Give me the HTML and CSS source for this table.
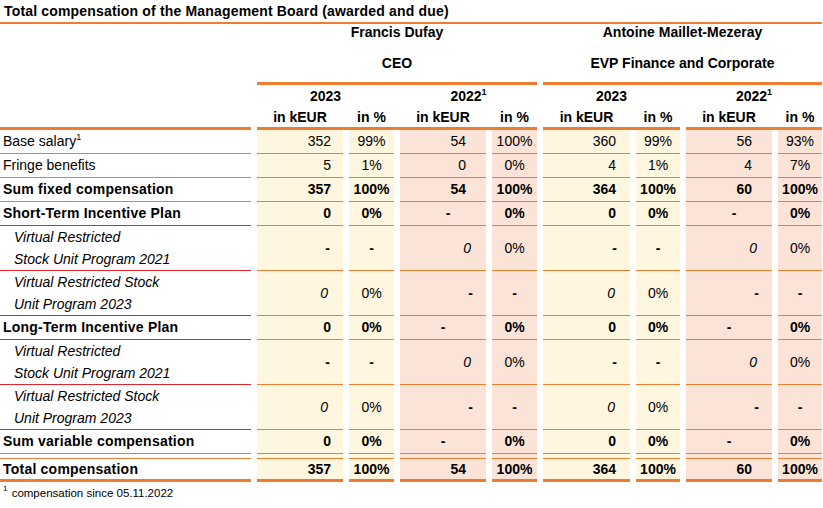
FILE: index.html
```html
<!DOCTYPE html>
<html lang="en">
<head>
<meta charset="utf-8">
<title>Total compensation of the Management Board</title>
<link rel="stylesheet" href="styles.css">
</head>
<body>
<div class="tbl">
  <div class="title">Total compensation of the Management Board (awarded and due)</div>

  <div class="blank"></div>
  <div class="person span-f"><div class="name">Francis Dufay</div><div class="role">CEO</div></div>
  <div class="person span-a"><div class="name">Antoine Maillet-Mezeray</div><div class="role">EVP Finance and Corporate</div></div>

  <div class="blank"></div>
  <div class="yr s23a">2023</div>
  <div class="yr s22a">2022<sup class="sup">1</sup></div>
  <div class="yr s23b">2023</div>
  <div class="yr s22b">2022<sup class="sup">1</sup></div>

  <div class="blank"></div>
  <div class="unit">in kEUR</div><div class="unit">in %</div>
  <div class="unit">in kEUR</div><div class="unit">in %</div>
  <div class="unit">in kEUR</div><div class="unit">in %</div>
  <div class="unit">in kEUR</div><div class="unit">in %</div>

  <div class="hline"></div>
  <div class="hline span-f"></div>
  <div class="hline s23b"></div>
  <div class="hline s22b"></div>

  <!-- Base salary -->
  <div class="lbl"><span>Base salary<sup class="sup">1</sup></span></div>
  <div class="d y k k1">352</div><div class="d y c">99%</div>
  <div class="d p k k2">54</div><div class="d p c">100%</div>
  <div class="d y k k3">360</div><div class="d y c">99%</div>
  <div class="d p k k4">56</div><div class="d p c">93%</div>

  <!-- Fringe benefits -->
  <div class="lbl"><span>Fringe benefits</span></div>
  <div class="d y k k1">5</div><div class="d y c">1%</div>
  <div class="d p k k2">0</div><div class="d p c">0%</div>
  <div class="d y k k3">4</div><div class="d y c">1%</div>
  <div class="d p k k4">4</div><div class="d p c">7%</div>

  <!-- Sum fixed -->
  <div class="lbl b"><span>Sum fixed compensation</span></div>
  <div class="d y k k1 b">357</div><div class="d y c b">100%</div>
  <div class="d p k k2 b">54</div><div class="d p c b">100%</div>
  <div class="d y k k3 b">364</div><div class="d y c b">100%</div>
  <div class="d p k k4 b">60</div><div class="d p c b">100%</div>

  <!-- STIP -->
  <div class="lbl b red"><span>Short-Term Incentive Plan</span></div>
  <div class="d y k k1 b">0</div><div class="d y c b">0%</div>
  <div class="d p c b sh">-</div><div class="d p c b">0%</div>
  <div class="d y k k3 b">0</div><div class="d y c b">0%</div>
  <div class="d p c b sh">-</div><div class="d p c b">0%</div>

  <!-- VRSU 2021 -->
  <div class="lbl i red"><span>Virtual Restricted<br>Stock Unit Program 2021</span></div>
  <div class="d y k dash b">-</div><div class="d y c b">-</div>
  <div class="d p k it">0</div><div class="d p c">0%</div>
  <div class="d y k dash b">-</div><div class="d y c b">-</div>
  <div class="d p k it">0</div><div class="d p c">0%</div>

  <!-- VRSU 2023 -->
  <div class="lbl i red"><span>Virtual Restricted Stock<br>Unit Program 2023</span></div>
  <div class="d y k it">0</div><div class="d y c">0%</div>
  <div class="d p k dash b">-</div><div class="d p c b">-</div>
  <div class="d y k it">0</div><div class="d y c">0%</div>
  <div class="d p k dash b">-</div><div class="d p c b">-</div>

  <!-- LTIP -->
  <div class="lbl b red"><span>Long-Term Incentive Plan</span></div>
  <div class="d y k k1 b">0</div><div class="d y c b">0%</div>
  <div class="d p c b">-</div><div class="d p c b">0%</div>
  <div class="d y k k3 b">0</div><div class="d y c b">0%</div>
  <div class="d p c b">-</div><div class="d p c b">0%</div>

  <!-- VRSU 2021 -->
  <div class="lbl i red"><span>Virtual Restricted<br>Stock Unit Program 2021</span></div>
  <div class="d y k dash b">-</div><div class="d y c b">-</div>
  <div class="d p k it">0</div><div class="d p c">0%</div>
  <div class="d y k dash b">-</div><div class="d y c b">-</div>
  <div class="d p k it">0</div><div class="d p c">0%</div>

  <!-- VRSU 2023 -->
  <div class="lbl i red"><span>Virtual Restricted Stock<br>Unit Program 2023</span></div>
  <div class="d y k it">0</div><div class="d y c">0%</div>
  <div class="d p k dash b">-</div><div class="d p c b">-</div>
  <div class="d y k it">0</div><div class="d y c">0%</div>
  <div class="d p k dash b">-</div><div class="d p c b">-</div>

  <!-- Sum variable -->
  <div class="lbl b"><span>Sum variable compensation</span></div>
  <div class="d y k k1 b">0</div><div class="d y c b">0%</div>
  <div class="d p c b">-</div><div class="d p c b">0%</div>
  <div class="d y k k3 b">0</div><div class="d y c b">0%</div>
  <div class="d p c b">-</div><div class="d p c b">0%</div>

  <!-- Total -->
  <div class="lbl b tot"><span>Total compensation</span></div>
  <div class="d y k k1 b tot">357</div><div class="d y c b tot">100%</div>
  <div class="d p k k2 b tot">54</div><div class="d p c b tot">100%</div>
  <div class="d y k k3 b tot">364</div><div class="d y c b tot">100%</div>
  <div class="d p k k4 b tot">60</div><div class="d p c b tot">100%</div>
</div>
<div class="foot"><sup class="fsup">1</sup> compensation since 05.11.2022</div>
</body>
</html>
```

FILE: styles.css
```css
html, body {
  margin: 0;
  padding: 0;
  background: #ffffff;
}

body {
  font-family: "Liberation Sans", Arial, sans-serif;
  font-size: 14px;
  color: #000000;
  width: 823px;
}

.tbl {
  display: grid;
  grid-template-columns: 251px 86px 45px 86px 45px 87px 44px 86px 44px;
  column-gap: 6px;
  width: 822px;
}

.title {
  grid-column: 1 / -1;
  font-weight: bold;
  line-height: 22px;
  padding-left: 4px;
  letter-spacing: 0.17px;
  border-bottom: 2px solid #ed7d31;
}

.blank {
  grid-column: 1 / 2;
}

.span-f { grid-column: 2 / 6; }
.span-a { grid-column: 6 / 10; }
.s23a { grid-column: 2 / 4; }
.s22a { grid-column: 4 / 6; }
.s23b { grid-column: 6 / 8; }
.s22b { grid-column: 8 / 10; }

.person {
  display: flex;
  flex-direction: column;
  align-items: center;
  font-weight: bold;
  padding-bottom: 9px;
  border-bottom: 3px solid #ed7d31;
}

.person .name {
  line-height: 17px;
}

.person .role {
  line-height: 20px;
  margin-top: 12px;
}

.yr {
  text-align: center;
  font-weight: bold;
  line-height: 22px;
}

.unit {
  text-align: center;
  font-weight: bold;
  line-height: 20px;
}

.sup {
  font-size: 9px;
  line-height: 0;
  vertical-align: 6px;
  font-weight: normal;
}

.yr .sup {
  font-weight: bold;
}

.hline {
  height: 3px;
  background: #ed7d31;
}

.lbl {
  display: flex;
  align-items: center;
  line-height: 23px;
  padding-left: 3px;
  border-bottom: 1px solid #ed7d31;
}

.lbl.b {
  letter-spacing: 0.22px;
}

.lbl.red {
  border-bottom-color: #e2262c;
}

.lbl.i {
  font-style: italic;
  line-height: 22px;
  padding-left: 14px;
}

.b {
  font-weight: bold;
}

.d {
  display: flex;
  align-items: center;
  line-height: 23px;
  border-bottom: 1px solid #ed7d31;
}

.y { background-color: #fef6df; }
.p { background-color: #fbe4d7; }

.k { justify-content: flex-end; }
.c { justify-content: center; }

.k1 { padding-right: 12px; }
.k2 { padding-right: 20px; }
.k3 { padding-right: 14px; }
.k4 { padding-right: 20px; }

.d.it {
  font-style: italic;
  padding-right: 15px;
}

.d.dash {
  padding-right: 13px;
}

.d.sh {
  padding-left: 10px;
}

.tot {
  line-height: 20px;
  padding-top: 5px;
  border-bottom: 3px solid #ed7d31;
  background-image: linear-gradient(#ed7d31, #ed7d31);
  background-size: 100% 1px;
  background-position: 0 4px;
  background-repeat: no-repeat;
}

.foot {
  font-size: 11.5px;
  line-height: 22px;
  padding-left: 3px;
}

.fsup {
  font-size: 8px;
  line-height: 0;
  vertical-align: 6px;
  margin-right: 1px;
}
```
